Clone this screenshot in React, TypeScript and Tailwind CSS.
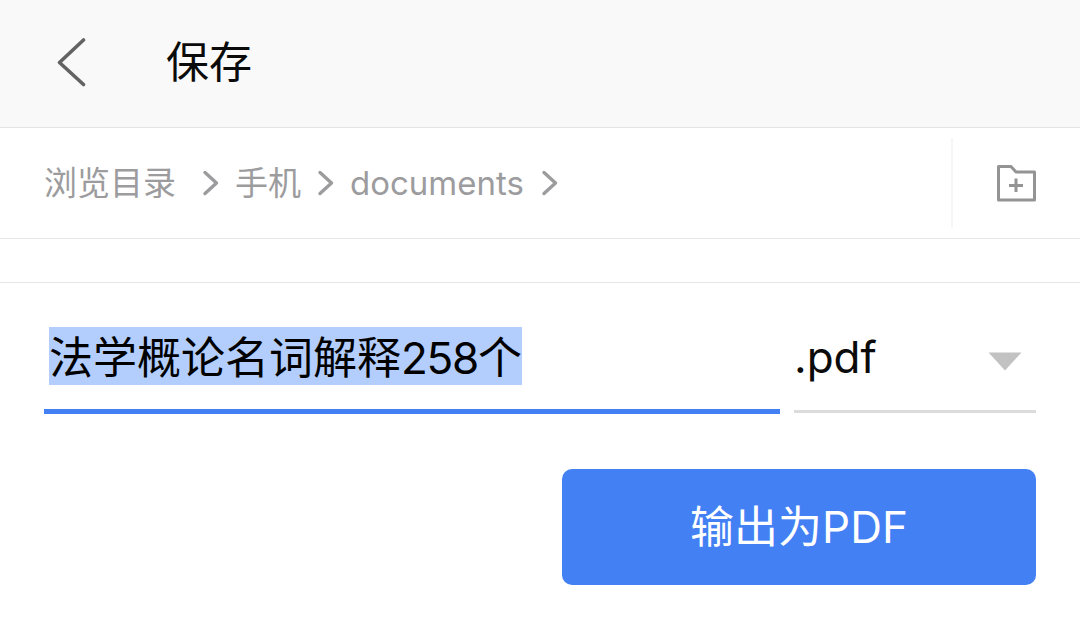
const font = { fontFamily: '"Inter", "Noto Sans CJK SC", sans-serif' };

function Chevron() {
  return (
    <svg width="18" height="26" viewBox="0 0 18 26" fill="none" className="shrink-0">
      <path d="M3 2.5 L14.5 13 L3 23.5" stroke="#9c9c9e" strokeWidth="3.4" strokeLinecap="round" strokeLinejoin="round" />
    </svg>
  );
}

export default function App() {
  return (
    <div className="w-[1080px] h-[618px] bg-white overflow-hidden flex flex-col" style={font}>
      <header className="h-[128px] shrink-0 bg-[#f9f9f9] border-b border-[#e4e4e4] flex items-center pl-[55px] pb-[2px]">
        <svg width="32" height="50" viewBox="0 0 32 50" fill="none" className="shrink-0">
          <path d="M28.5 2 L4.5 24.5 L28.5 46.5" stroke="#636363" strokeWidth="3.6" strokeLinecap="round" strokeLinejoin="round" />
        </svg>
        <span className="ml-[79px] text-[43px] leading-none text-[#0b0b0b]">保存</span>
      </header>

      <div className="h-[111px] shrink-0 border-b border-[#e6e6e6] flex items-center pl-[44px] pr-[44px]">
        <div className="flex-1 flex items-center text-[33px] leading-none text-[#9c9c9e]">
          <span>浏览目录</span>
          <span className="ml-[26px] mr-[15px] flex"><Chevron /></span>
          <span>手机</span>
          <span className="ml-[16px] mr-[15px] flex"><Chevron /></span>
          <span>documents</span>
          <span className="ml-[17px] flex"><Chevron /></span>
        </div>
        <div className="w-[2px] h-[90px] bg-[#f6f6f6] mr-[44px] translate-x-[1px]" />
        <svg width="40" height="38" viewBox="0 0 40 38" fill="none" className="shrink-0">
          <path d="M2.5 2.5 H15 L20 8 H38.5 V36 H2.5 Z" stroke="#949494" strokeWidth="3" strokeLinejoin="round" />
          <path d="M20 14.5 V28 M13 21.5 H27" stroke="#949494" strokeWidth="3" />
        </svg>
      </div>

      <div className="h-[44px] shrink-0 border-b border-[#e6e6e6]" />

      <div className="flex px-[44px] pt-[44px] gap-[14px]">
        <div className="w-[736px] h-[87px] border-b-[5px] border-[#4280f4] pl-[5px] flex items-start">
          <span className="bg-[#b3cefc] h-[58px] text-[44px] leading-[62px] text-black whitespace-nowrap">
            法学概论名词解释<span className="tracking-[-1.3px]">258</span>个
          </span>
        </div>
        <div className="w-[242px] h-[86px] border-b-[3px] border-[#dcdcdc] flex items-start justify-between pr-[14px]">
          <span className="text-[44px] leading-[60px] text-[#0b0b0b]">.pdf</span>
          <svg width="34" height="19" viewBox="0 0 34 19" className="mt-[25px]">
            <path d="M0.5 0.5 H33.5 L17 18.5 Z" fill="#c2c2c2" />
          </svg>
        </div>
      </div>

      <div className="flex justify-end pr-[44px] pt-[55px]">
        <button className="w-[474px] h-[116px] rounded-[10px] bg-[#4280f4] text-white text-[44px] leading-none flex items-center justify-center">
          输出为PDF
        </button>
      </div>
    </div>
  );
}
